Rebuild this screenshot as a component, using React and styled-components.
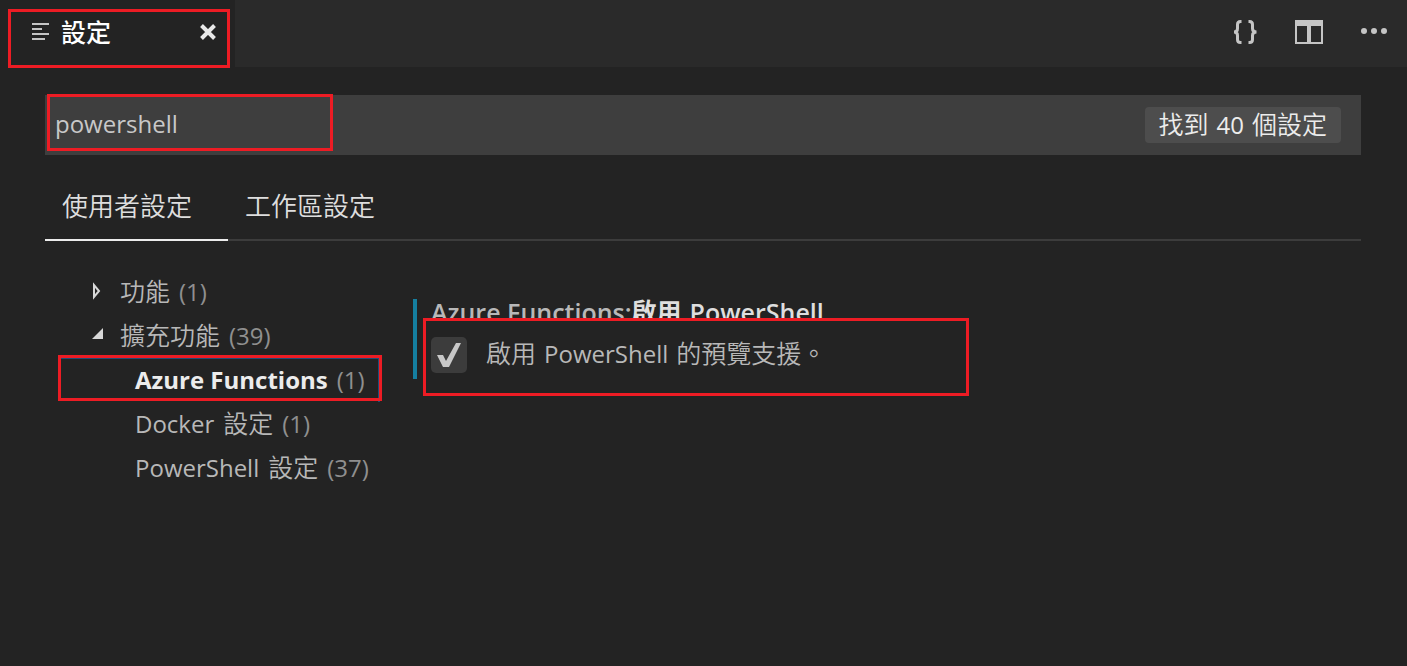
import React, { useState } from "react";
import styled, { createGlobalStyle } from "styled-components";

const latin = `"Open Sans", "Noto Sans", sans-serif`;
const cjk = `"Noto Sans CJK TC", "Open Sans", sans-serif`;

const GlobalStyle = createGlobalStyle`
  *, *::before, *::after { box-sizing: border-box; }
  body {
    margin: 0;
    background: #232323;
    color: #b8b8b8;
    font-family: ${cjk};
    font-size: 25px;
    font-weight: 350;
    line-height: 44px;
  }
  button, input { font: inherit; color: inherit; margin: 0; padding: 0; border: 0; background: none; }
  button { cursor: pointer; }
`;

const Page = styled.div`
  display: flex;
  flex-direction: column;
  min-height: 100vh;
`;

const Latin = styled.span`
  font-family: ${latin};
  font-size: 24px;
  font-weight: 400;
`;

const Han = styled.span`
  padding-bottom: 4px;
`;

const Callout = styled.span`
  position: absolute;
  inset: ${(p) => p.$inset};
  width: ${(p) => p.$width || "auto"};
  border: 3px solid #ed1c24;
  pointer-events: none;
`;

const TitleBar = styled.header`
  display: flex;
  justify-content: space-between;
  height: 67px;
  background: #2a2a2a;
`;

const EditorTab = styled.div`
  position: relative;
  display: flex;
  align-items: center;
  width: 235px;
  padding: 0 18px 4px 32px;
  background: #232323;
`;

const TabTitle = styled(Han)`
  flex: 1;
  margin-left: 11px;
  padding-bottom: 2px;
  color: #fff;
  font-weight: 500;
`;

const IconButton = styled.button`
  display: flex;
  align-items: center;
  color: #c5c5c5;
`;

const Actions = styled.div`
  display: flex;
  align-items: center;
  gap: 36px;
  padding: 0 18px 4px 0;
`;

const Content = styled.main`
  display: flex;
  flex-direction: column;
  padding: 28px 46px 0 45px;
`;

const SearchBar = styled.div`
  position: relative;
  display: flex;
  align-items: center;
  height: 60px;
  padding: 0 20px 0 10px;
  background: #3e3e3e;
`;

const SearchInput = styled.input`
  flex: 1;
  min-width: 0;
  height: 44px;
  padding-bottom: 2px;
  color: #c8c8c8;
  font-family: ${latin};
  font-size: 24px;
  font-weight: 400;
  outline: none;
`;

const ResultCount = styled.span`
  display: flex;
  align-items: center;
  gap: 8px;
  height: 36px;
  padding: 0 14px;
  border-radius: 4px;
  background: #4d4d4d;
  color: #ececec;
`;

const ScopeTabs = styled.div`
  display: flex;
  height: 86px;
  padding-top: 22px;
  border-bottom: 2px solid #3c3c3c;
`;

const ScopeTab = styled.button`
  height: 64px;
  margin-bottom: -2px;
  padding: 0 36px 6px 17px;
  border-bottom: 2px solid ${(p) => (p.$active ? "#ececec" : "transparent")};
  color: #dedede;
  font-size: 26px;
`;

const Body = styled.div`
  display: flex;
  gap: 33px;
  padding: 29px 0 0 13px;
`;

const Tree = styled.ul`
  flex: none;
  width: 322px;
  margin: 0;
  padding: 0;
  list-style: none;
`;

const TreeItem = styled.li`
  position: relative;
`;

const TreeRow = styled.button`
  display: flex;
  align-items: center;
  gap: 9px;
  width: 100%;
  height: 44px;
  padding-left: ${(p) => (p.$child ? 77 : 31)}px;
  text-align: left;
  white-space: nowrap;
  color: ${(p) => (p.$selected ? "#ececec" : "#b8b8b8")};
  outline: none;
  box-shadow: ${(p) => (p.$selected ? "inset -2px 1px #1f4d78" : "none")};
`;

const SelectedName = styled(Latin)`
  font-weight: 700;
`;

const Twistie = styled.svg`
  flex: none;
  width: 22px;
  height: 24px;
  fill: ${(p) => (p.$open ? "#d8d8d8" : "none")};
  stroke: #d8d8d8;
`;

const Count = styled(Latin)`
  color: #8f8f8f;
`;

const Setting = styled.section`
  flex: 1;
  height: 80px;
  margin-top: 29px;
  padding-left: 6px;
  border-left: 4px solid #157fa0;
`;

const SettingTitle = styled.h2`
  display: flex;
  height: 26px;
  margin: 0;
  padding-left: 8px;
  font-family: ${latin};
  font-size: 25px;
  font-weight: 600;
  line-height: 26px;
  white-space: nowrap;
`;

const SettingName = styled.span`
  display: flex;
  gap: 8px;
  color: #dedede;
`;

const SettingHan = styled(Han)`
  font-family: ${cjk};
  line-height: 22px;
`;

const OptionFrame = styled.div`
  position: relative;
  max-width: 546px;
  margin-top: -7px;
  padding: 16px 5px 20px;
  border: 3px solid #ed1c24;
  background: #232323;
`;

const SettingOption = styled.label`
  display: flex;
  align-items: center;
  gap: 19px;
  height: 36px;
  white-space: nowrap;
  cursor: pointer;
`;

const CheckBox = styled.span`
  display: grid;
  flex: none;
  width: 36px;
  height: 36px;

  > * { grid-area: 1 / 1; }
`;

const CheckInput = styled.input`
  appearance: none;
  width: 36px;
  height: 36px;
  border-radius: 5px;
  background: #3c3c3c;
`;

const CheckMark = styled.svg`
  pointer-events: none;
  fill: #c8c8c8;
`;

const OptionText = styled.span`
  display: flex;
  align-items: center;
  gap: 8px;
  padding-bottom: 2px;
`;

function Chevron({ open }) {
  return (
    <Twistie $open={open} viewBox="0 0 22 24" aria-hidden="true">
      {open ? (
        <path stroke="none" d="M14 4v11H3z" />
      ) : (
        <path strokeWidth="2" d="M5 5v12L10 11z" />
      )}
    </Twistie>
  );
}

const scopes = ["使用者設定", "工作區設定"];

export default function App() {
  const [query, setQuery] = useState("powershell");
  const [enabled, setEnabled] = useState(true);
  const [scope, setScope] = useState(0);

  return (
    <Page>
      <GlobalStyle />
      <TitleBar>
        <EditorTab>
          <svg width="18" height="20" viewBox="0 0 18 20" fill="#c5c5c5" aria-hidden="true">
            <path d="M0 1h17v2H0zM0 6h10v2H0zM0 11h17v2H0zM0 16h13v2H0z" />
          </svg>
          <TabTitle>設定</TabTitle>
          <IconButton aria-label="關閉">
            <svg width="18" height="18" viewBox="0 0 18 18" fill="none" stroke="#e8e8e8" strokeWidth="4">
              <path d="M2.500 2.500l13 13M15.500 2.500l-13 13" />
            </svg>
          </IconButton>
          <Callout $inset="9px 5px -1px 8px" />
        </EditorTab>
        <Actions>
          <IconButton aria-label="開啟設定 (JSON)">
            <svg width="26" height="26" viewBox="0 0 26 26" fill="none" stroke="currentColor" strokeWidth="3">
              <path d="M8.500 2.500H7.500Q4.500 2.500 4.500 5.500V9.500Q4.500 13 1 13Q4.500 13 4.500 16.500V20.500Q4.500 23.500 7.500 23.500H8.500" />
              <path d="M15.500 2.500H16.500Q19.500 2.500 19.500 5.500V9.500Q19.500 13 23.500 13Q19.500 13 19.500 16.500V20.500Q19.500 23.500 16.500 23.500H15.500" />
            </svg>
          </IconButton>
          <IconButton aria-label="分割編輯器">
            <svg width="28" height="24" viewBox="0 0 28 24" fill="currentColor">
              <path fillRule="evenodd" d="M0 0h28v24H0zM2 6v16h10V6zM16 6v16h10V6z" />
            </svg>
          </IconButton>
          <IconButton aria-label="更多">
            <svg width="30" height="8" viewBox="0 0 30 8" fill="currentColor">
              <circle cx="5" cy="3" r="3" />
              <circle cx="15" cy="3" r="3" />
              <circle cx="25" cy="3" r="3" />
            </svg>
          </IconButton>
        </Actions>
      </TitleBar>

      <Content>
        <SearchBar>
          <SearchInput
            aria-label="搜尋設定"
            value={query}
            onChange={(e) => setQuery(e.target.value)}
          />
          <ResultCount>
            <Han>找到</Han> <Latin>40</Latin> <Han>個設定</Han>
          </ResultCount>
          <Callout $inset="-1px auto 4px 2px" $width="286px" />
        </SearchBar>

        <ScopeTabs role="tablist">
          {scopes.map((name, i) => (
            <ScopeTab
              key={name}
              role="tab"
              aria-selected={scope === i}
              $active={scope === i}
              onClick={() => setScope(i)}
            >
              {name}
            </ScopeTab>
          ))}
        </ScopeTabs>

        <Body>
          <Tree>
            <TreeItem>
              <TreeRow aria-expanded="false">
                <Chevron />
                <Han>功能</Han> <Count>(1)</Count>
              </TreeRow>
            </TreeItem>
            <TreeItem>
              <TreeRow aria-expanded="true">
                <Chevron open />
                <Han>擴充功能</Han> <Count>(39)</Count>
              </TreeRow>
            </TreeItem>
            <TreeItem>
              <TreeRow $child $selected>
                <SelectedName>Azure Functions</SelectedName> <Count>(1)</Count>
              </TreeRow>
              <Callout $inset="-3px -2px 1px 0" />
            </TreeItem>
            <TreeItem>
              <TreeRow $child>
                <Latin>Docker</Latin> <Han>設定</Han> <Count>(1)</Count>
              </TreeRow>
            </TreeItem>
            <TreeItem>
              <TreeRow $child>
                <Latin>PowerShell</Latin> <Han>設定</Han> <Count>(37)</Count>
              </TreeRow>
            </TreeItem>
          </Tree>

          <Setting>
            <SettingTitle>
              Azure Functions:
              <SettingName>
                <SettingHan>啟用</SettingHan> PowerShell
              </SettingName>
            </SettingTitle>
            <OptionFrame>
              <SettingOption>
                <CheckBox>
                  <CheckInput
                    type="checkbox"
                    checked={enabled}
                    onChange={(e) => setEnabled(e.target.checked)}
                  />
                  {enabled && (
                    <CheckMark width="36" height="36" viewBox="0 0 36 36" aria-hidden="true">
                      <path d="M6 18h6l3 6L25 6h5L18 30h-6z" />
                    </CheckMark>
                  )}
                </CheckBox>
                <OptionText>
                  <Han>啟用</Han> <Latin>PowerShell</Latin> <Han>的預覽支援。</Han>
                </OptionText>
              </SettingOption>
            </OptionFrame>
          </Setting>
        </Body>
      </Content>
    </Page>
  );
}
